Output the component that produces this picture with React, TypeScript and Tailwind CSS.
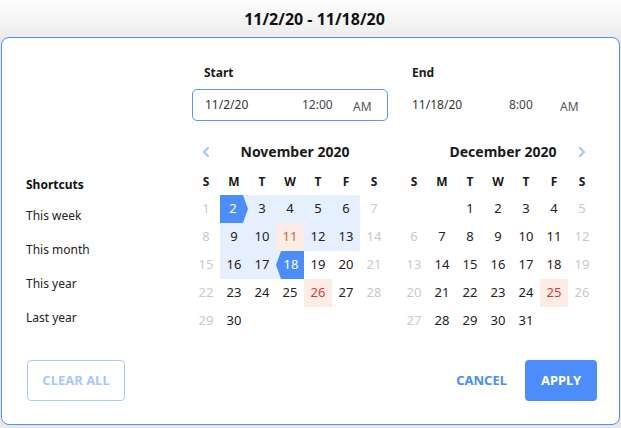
import React from "react"

const font = { fontFamily: '"Segoe UI", "Noto Sans", Arial, sans-serif' }

type Cell = { d: number | null; wk: boolean; range?: boolean; start?: boolean; end?: boolean; holiday?: "soft" | "red" }

const buildMonth = (firstDow: number, days: number, opts: { range?: [number, number]; holidays?: Record<number, "soft" | "red"> }) => {
  const cells: Cell[] = []
  for (let i = 0; i < firstDow; i++) cells.push({ d: null, wk: false })
  for (let d = 1; d <= days; d++) {
    const dow = (firstDow + d - 1) % 7
    const wk = dow === 0 || dow === 6
    const inRange = !!opts.range && d >= opts.range[0] && d <= opts.range[1] && !wk
    cells.push({
      d,
      wk,
      range: inRange,
      start: opts.range && d === opts.range[0],
      end: opts.range && d === opts.range[1],
      holiday: opts.holidays?.[d],
    })
  }
  return cells
}

const Chevron = ({ dir }: { dir: "left" | "right" }) => (
  <svg width="8" height="10" viewBox="0 0 8 10" fill="none">
    <path d={dir === "left" ? "M6 1 L2 5 L6 9" : "M2 1 L6 5 L2 9"} stroke="#a7c6f8" strokeWidth="2.2" strokeLinecap="round" strokeLinejoin="round" />
  </svg>
)

const DayCell = ({ c }: { c: Cell }) => {
  if (c.d === null) return <div className="h-[28px]" />
  if (c.start || c.end) {
    return (
      <div className="h-[28px] bg-[#e6effd]">
        <div className={`h-full bg-[#4d8df7] text-white flex items-center justify-center ${c.start ? "[clip-path:polygon(0_0,82%_0,100%_50%,82%_100%,0_100%)]" : "[clip-path:polygon(18%_0,100%_0,100%_100%,18%_100%,0_50%)]"}`}>
          <span className={c.start ? "pr-[2px]" : "pl-[2px]"}>{c.d}</span>
        </div>
      </div>
    )
  }
  let cls = "text-[#222]"
  if (c.wk) cls = "text-[#c9c9c9]"
  let bg = c.range ? "bg-[#e6effd]" : ""
  if (c.holiday) {
    bg = "bg-[#fdece6]"
    cls = c.holiday === "soft" ? "text-[#bf6a3e]" : "text-[#d23c36]"
  }
  return <div className={`h-[28px] flex items-center justify-center ${bg} ${cls}`}>{c.d}</div>
}

const Month = ({ title, cells, prev, next }: { title: string; cells: Cell[]; prev?: boolean; next?: boolean }) => (
  <div className="w-[196px]">
    <div className="grid grid-cols-[28px_1fr_28px] h-[20px] items-center mb-[8px]">
      <div className="flex justify-center">{prev && <Chevron dir="left" />}</div>
      <div className="text-center text-[14px] font-bold text-[#1a1a1a] pl-[10px]">{title}</div>
      <div className="flex justify-center">{next && <Chevron dir="right" />}</div>
    </div>
    <div className="grid grid-cols-7 h-[26px] items-center text-[12px] font-bold text-[#1a1a1a]">
      {["S", "M", "T", "W", "T", "F", "S"].map((d, i) => (
        <div key={i} className="text-center">{d}</div>
      ))}
    </div>
    <div className="grid grid-cols-7 text-[13px]">
      {cells.map((c, i) => (
        <DayCell key={i} c={c} />
      ))}
    </div>
  </div>
)

const TimeRow = ({ label, date, time, active }: { label: string; date: string; time: string; active?: boolean }) => (
  <div className="w-[196px]">
    <div className="h-[16px] text-[12px] font-bold text-[#1a1a1a] pl-[12px] leading-[16px]">{label}</div>
    <div className={`mt-[8px] h-[32px] rounded-[5px] flex items-center pl-[12px] text-[12px] text-[#333] ${active ? "border border-[#5b95f5] pl-[11px]" : ""}`}>
      <span className="w-[97px]">{date}</span>
      <span className="w-[51px] text-[#444]">{time}</span>
      <span className="text-[#555] mt-[3px]">AM</span>
    </div>
  </div>
)

export default function App() {
  const nov = buildMonth(0, 30, { range: [2, 18], holidays: { 11: "soft", 26: "red" } })
  const dec = buildMonth(2, 31, { holidays: { 25: "red" } })
  return (
    <div className="w-[621px] h-[428px] bg-[#e8e8e8] flex flex-col" style={font}>
      <div className="h-[37px] bg-gradient-to-b from-[#fefefe] to-[#ececec] flex items-center justify-center pl-[8px] text-[16px] font-bold text-[#111]">
        11/2/20 - 11/18/20
      </div>
      <div className="ml-[1px] w-[619px] h-[388px] bg-white border border-[#4f8ef6] rounded-[8px] flex flex-col">
        <div className="flex pt-[27px]">
          <div className="w-[190px] pl-[24px] pt-[112px] text-[12px] text-[#222]">
            <div className="font-bold h-[16px] leading-[16px] text-[#111]">Shortcuts</div>
            <div className="flex flex-col gap-[18px] mt-[15px]">
              {["This week", "This month", "This year", "Last year"].map((s) => (
                <div key={s} className="h-[16px] leading-[16px]">{s}</div>
              ))}
            </div>
          </div>
          <div className="flex flex-col">
            <div className="flex gap-[12px]">
              <TimeRow label="Start" date="11/2/20" time="12:00" active />
              <TimeRow label="End" date="11/18/20" time="8:00" />
            </div>
            <div className="flex gap-[12px] mt-[20px]">
              <Month title="November 2020" cells={nov} prev />
              <Month title="December 2020" cells={dec} next />
            </div>
          </div>
        </div>
        <div className="mt-auto mb-[23px] flex items-center justify-between pl-[25px] pr-[22px]">
          <button className="w-[98px] h-[41px] rounded-[4px] border border-[#aecbfb] text-[#a9c7f9] text-[13px] font-bold">CLEAR ALL</button>
          <div className="flex items-center gap-[18px]">
            <button className="text-[#4d8df7] text-[13px] font-bold">CANCEL</button>
            <button className="w-[72px] h-[41px] rounded-[4px] bg-[#4d8dfb] text-white text-[13px] font-bold">APPLY</button>
          </div>
        </div>
      </div>
    </div>
  )
}
